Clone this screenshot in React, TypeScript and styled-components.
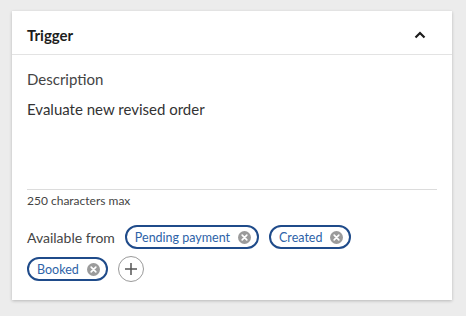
import React from 'react'
import styled, { createGlobalStyle } from 'styled-components'

const GlobalStyle = createGlobalStyle`
  body {
    margin: 0;
    background: #ececec;
    font-family: Lato, "Noto Sans", sans-serif;
  }
`

const Page = styled.div`
  width: 466px;
  height: 316px;
  padding: 11px 14px 0 12px;
  box-sizing: border-box;
  overflow: hidden;
`

const Card = styled.section`
  width: 440px;
  height: 289px;
  background: #fff;
  box-shadow: 0 1px 3px rgba(0, 0, 0, 0.22);
  display: flex;
  flex-direction: column;
`

const Header = styled.header`
  height: 44px;
  box-sizing: border-box;
  display: flex;
  align-items: center;
  justify-content: space-between;
  padding: 5px 26px 0 15px;
  border-bottom: 1px solid #e3e3e3;
`

const Title = styled.h2`
  margin: 0;
  font-size: 15px;
  font-weight: 700;
  color: #1d1d1d;
`

const Body = styled.div`
  padding: 14px 15px 0 15px;
  display: flex;
  flex-direction: column;
`

const Label = styled.div`
  font-size: 15px;
  line-height: 20px;
  color: #444;
`

const TextArea = styled.div`
  margin-top: 10px;
  height: 90px;
  border-bottom: 1px solid #dcdcdc;
  font-size: 15px;
  line-height: 20px;
  color: #333;
`

const Hint = styled.div`
  margin-top: 3px;
  font-size: 12px;
  line-height: 16px;
  color: #444;
`

const Chips = styled.div`
  margin-top: 16px;
  max-width: 360px;
  display: flex;
  flex-wrap: wrap;
  align-items: center;
  gap: 7px 10px;
`

const ChipsLabel = styled.span`
  font-size: 14px;
  color: #444;
`

const Chip = styled.span`
  height: 24px;
  box-sizing: border-box;
  display: inline-flex;
  align-items: center;
  gap: 8px;
  padding: 0 6px 0 8px;
  border: 2px solid #1f4b8a;
  border-radius: 13px;
  font-size: 12.5px;
  color: #2e63a8;
`

const AddButton = styled.span`
  width: 26px;
  height: 26px;
  box-sizing: border-box;
  border: 1.5px solid #9a9a9a;
  border-radius: 50%;
  display: inline-flex;
  align-items: center;
  justify-content: center;
`

const CloseIcon = () => (
  <svg width="13" height="13" viewBox="0 0 14 14">
    <circle cx="7" cy="7" r="7" fill="#9b9b9b" />
    <path d="M4.5 4.5l5 5M9.5 4.5l-5 5" stroke="#fff" strokeWidth="1.8" strokeLinecap="round" />
  </svg>
)

const Chevron = () => (
  <svg width="12" height="8" viewBox="0 0 12 8">
    <path d="M1.5 6.5L6 2l4.5 4.5" fill="none" stroke="#1d1d1d" strokeWidth="2.2" />
  </svg>
)

const states = ['Pending payment', 'Created', 'Booked']

export default function App() {
  return (
    <Page>
      <GlobalStyle />
      <Card>
        <Header>
          <Title>Trigger</Title>
          <Chevron />
        </Header>
        <Body>
          <Label>Description</Label>
          <TextArea>Evaluate new revised order</TextArea>
          <Hint>250 characters max</Hint>
          <Chips>
            <ChipsLabel>Available from</ChipsLabel>
            {states.map((s) => (
              <Chip key={s}>
                {s}
                <CloseIcon />
              </Chip>
            ))}
            <AddButton>
              <svg width="14" height="14" viewBox="0 0 14 14">
                <path d="M7 1v12M1 7h12" stroke="#555" strokeWidth="1.5" />
              </svg>
            </AddButton>
          </Chips>
        </Body>
      </Card>
    </Page>
  )
}
